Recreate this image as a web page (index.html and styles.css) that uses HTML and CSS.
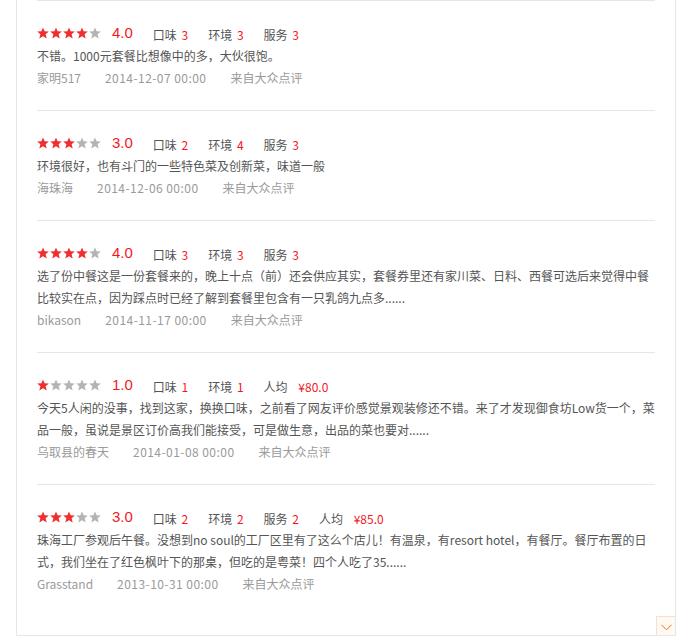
FILE: index.html
```html
<!DOCTYPE html>
<html lang="zh-CN">
<head>
  <meta charset="UTF-8">
  <meta name="viewport" content="width=device-width, initial-scale=1.0">
  <title>点评列表</title>
  <link rel="stylesheet" href="styles.css">
</head>
<body>
  <svg class="defs" width="0" height="0">
    <symbol id="star" viewBox="0 0 12 12">
      <polygon points="6,0.4 7.6,4.3 11.8,4.6 8.6,7.3 9.7,11.5 6,9.2 2.3,11.5 3.4,7.3 0.2,4.6 4.4,4.3"/>
    </symbol>
  </svg>
  <div class="panel">
    <ul class="reviews">
      <!-- 1 -->
      <li class="review">
        <div class="rate">
          <span class="stars"><svg class="on"><use href="#star"/></svg><svg class="on"><use href="#star"/></svg><svg class="on"><use href="#star"/></svg><svg class="on"><use href="#star"/></svg><svg><use href="#star"/></svg></span>
          <span class="score">4.0</span>
          <span class="item">口味 <em>3</em></span>
          <span class="item">环境 <em>3</em></span>
          <span class="item">服务 <em>3</em></span>
        </div>
        <p class="content">不错。1000元套餐比想像中的多，大伙很饱。</p>
        <div class="meta"><span>家明517</span><span class="date">2014-12-07 00:00</span><span>来自大众点评</span></div>
      </li>
      <!-- 2 -->
      <li class="review">
        <div class="rate">
          <span class="stars"><svg class="on"><use href="#star"/></svg><svg class="on"><use href="#star"/></svg><svg class="on"><use href="#star"/></svg><svg><use href="#star"/></svg><svg><use href="#star"/></svg></span>
          <span class="score">3.0</span>
          <span class="item">口味 <em>2</em></span>
          <span class="item">环境 <em>4</em></span>
          <span class="item">服务 <em>3</em></span>
        </div>
        <p class="content">环境很好，也有斗门的一些特色菜及创新菜，味道一般</p>
        <div class="meta"><span>海珠海</span><span class="date">2014-12-06 00:00</span><span>来自大众点评</span></div>
      </li>
      <!-- 3 -->
      <li class="review">
        <div class="rate">
          <span class="stars"><svg class="on"><use href="#star"/></svg><svg class="on"><use href="#star"/></svg><svg class="on"><use href="#star"/></svg><svg class="on"><use href="#star"/></svg><svg><use href="#star"/></svg></span>
          <span class="score">4.0</span>
          <span class="item">口味 <em>3</em></span>
          <span class="item">环境 <em>3</em></span>
          <span class="item">服务 <em>3</em></span>
        </div>
        <p class="content">选了份中餐这是一份套餐来的，晚上十点（前）还会供应其实，套餐券里还有家川菜、日料、西餐可选后来觉得中餐比较实在点，因为踩点时已经了解到套餐里包含有一只乳鸽九点多......</p>
        <div class="meta"><span>bikason</span><span class="date">2014-11-17 00:00</span><span>来自大众点评</span></div>
      </li>
      <!-- 4 -->
      <li class="review">
        <div class="rate">
          <span class="stars"><svg class="on"><use href="#star"/></svg><svg><use href="#star"/></svg><svg><use href="#star"/></svg><svg><use href="#star"/></svg><svg><use href="#star"/></svg></span>
          <span class="score">1.0</span>
          <span class="item">口味 <em>1</em></span>
          <span class="item">环境 <em>1</em></span>
          <span class="item">人均 <em class="price">¥80.0</em></span>
        </div>
        <p class="content">今天5人闲的没事，找到这家，换换口味，之前看了网友评价感觉景观装修还不错。来了才发现御食坊Low货一个，菜品一般，虽说是景区订价高我们能接受，可是做生意，出品的菜也要对......</p>
        <div class="meta"><span>乌取县的春天</span><span class="date">2014-01-08 00:00</span><span>来自大众点评</span></div>
      </li>
      <!-- 5 -->
      <li class="review">
        <div class="rate">
          <span class="stars"><svg class="on"><use href="#star"/></svg><svg class="on"><use href="#star"/></svg><svg class="on"><use href="#star"/></svg><svg><use href="#star"/></svg><svg><use href="#star"/></svg></span>
          <span class="score">3.0</span>
          <span class="item">口味 <em>2</em></span>
          <span class="item">环境 <em>2</em></span>
          <span class="item">服务 <em>2</em></span>
          <span class="item">人均 <em class="price">¥85.0</em></span>
        </div>
        <p class="content">珠海工厂参观后午餐。没想到no soul的工厂区里有了这么个店儿！有温泉，有resort hotel，有餐厅。餐厅布置的日式，我们坐在了红色枫叶下的那桌，但吃的是粤菜！四个人吃了35......</p>
        <div class="meta"><span>Grasstand</span><span class="date">2013-10-31 00:00</span><span>来自大众点评</span></div>
      </li>
    </ul>
    <div class="more-bar">
      <a class="more" href="#"><svg width="11" height="7" viewBox="0 0 11 7"><polyline points="0.5,0.8 5.5,5.8 10.5,0.8"/></svg></a>
    </div>
  </div>
</body>
</html>
```
FILE: styles.css
```css
:root {
  --red: #f5171d;
  --star-on: #ef2f2f;
  --star-off: #b4b4b4;
  --text: #555555;
  --muted: #9a9a9a;
  --line: #e6e6e6;
}
* { margin: 0; padding: 0; box-sizing: border-box; }
body {
  font-family: "Microsoft YaHei", "Noto Sans CJK SC", sans-serif;
  font-size: 12px;
  color: var(--text);
  background: #fff;
}
.defs { position: absolute; }
.panel {
  width: 660px;
  margin-left: 16px;
  border: 1px solid var(--line);
  border-top: none;
}
.reviews {
  list-style: none;
  padding: 0 20px;
}
.review {
  border-top: 1px solid var(--line);
  padding: 20px 0 21px;
}
.rate {
  display: flex;
  align-items: center;
  height: 24px;
}
.stars {
  display: flex;
  margin-right: 10px;
}
.stars svg {
  width: 12px;
  height: 12px;
  margin-right: 1px;
  fill: var(--star-off);
}
.stars svg.on { fill: var(--star-on); }
.score {
  font-family: "Liberation Sans", Arial, sans-serif;
  font-size: 15px;
  color: var(--red);
  margin-right: 20px;
  position: relative;
  top: -1px;
}
.item {
  margin-right: 20px;
  padding-top: 3px;
}
.item em {
  font-style: normal;
  color: var(--red);
  margin-left: 2px;
}
.item em.price { margin-left: 8px; }
.content {
  line-height: 22px;
}
.meta {
  line-height: 22px;
  color: var(--muted);
  display: flex;
}
.meta span { margin-right: 24px; }
.meta .date { letter-spacing: 0.45px; }
.more-bar {
  display: flex;
  justify-content: flex-end;
  height: 19px;
}
.more {
  display: flex;
  align-items: center;
  justify-content: center;
  width: 19px;
  height: 19px;
  background: #fff9f4;
  border: 1px solid #f6dfcc;
  border-right: none;
  border-bottom: none;
}
.more svg {
  fill: none;
  stroke: #ff6a00;
  stroke-width: 1;
  margin-top: 2px;
}
```
